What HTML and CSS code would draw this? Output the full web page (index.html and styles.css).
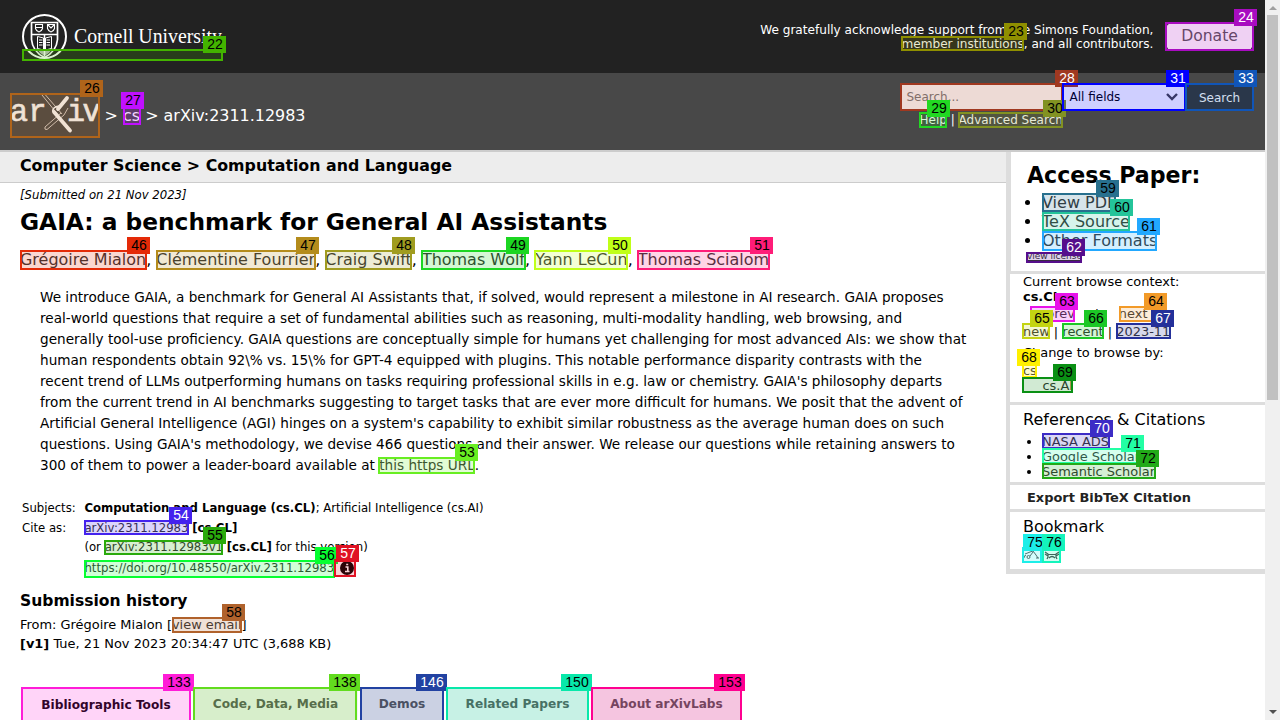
FILE: index.html
```html
<!DOCTYPE html>
<html lang="en">
<head>
<meta charset="utf-8">
<title>[2311.12983] GAIA: a benchmark for General AI Assistants</title>
<link rel="stylesheet" href="styles.css">
</head>
<body>
<div class="window">
  <div class="page">
    <header class="top">
      <svg class="cornell" width="204" height="48" viewBox="0 0 204 48">
        <circle cx="22.500" cy="23.500" r="21.500" fill="none" stroke="#fff" stroke-width="2"/>
        <path d="M9.500 9.500h26v17q-1 12-13 18q-12-6-13-18z" fill="none" stroke="#fff" stroke-width="1.700"/>
        <path d="M10 21.500h25M22.500 21.500v22" stroke="#fff" stroke-width="1.500"/>
        <path d="M13.500 11.500h7v4q-1 3-3.500 3.500q-2.500-.5-3.500-3.500zM25.500 11.500h7v4q-1 3-3.500 3.500q-2.500-.5-3.500-3.500zM13.500 14.500h7M26 12l3 3 3-3" fill="none" stroke="#fff" stroke-width="1.100"/>
        <path d="M15.500 23.500l6 1.500v12l-6-1.500zM29.500 23.500l-6 1.500v12l6-1.500z" fill="none" stroke="#fff"/>
        <path d="M17 27h3.500M17 29.500h3.500M17 32h3.500M24.500 27h3.500M24.500 29.500h3.500M24.500 32h3.500" stroke="#fff" stroke-width="1.200"/>
        <path d="M14 35q3 5 8.500 8q5.500-3 8.500-8l-8.500 3z" fill="#fff" opacity=".7"/>
        <text x="52" y="30" class="cornell-name" textLength="148" lengthAdjust="spacingAndGlyphs">Cornell University</text>
      </svg>
      <div class="sponsors">We gratefully acknowledge support from the Simons Foundation,<br><a>member institutions</a>, and all contributors.</div>
      <a class="donate">Donate</a>
    </header>
    <div class="bar">
      <div class="crumbs">
        <svg class="arxiv" width="90" height="45" viewBox="0 0 90 45">
          <g class="arxiv-letters"><text x="0" y="28" textLength="18" lengthAdjust="spacingAndGlyphs">a</text><text x="18.500" y="28" textLength="18" lengthAdjust="spacingAndGlyphs">r</text><text x="57" y="28" textLength="18" lengthAdjust="spacingAndGlyphs">i</text><text x="72.500" y="28" textLength="18" lengthAdjust="spacingAndGlyphs">v</text></g>
          <path d="M32 2L49 23M35.500 2L52 21M51 20L35 34Q34 37 37 36.500L54 22L58 15" fill="none" stroke="#d8d0cb" stroke-width="1"/>
          <path d="M57 5L48 16" stroke="#fff" stroke-width="3.800" stroke-linecap="round"/>
          <path d="M44 19L60 37.500" stroke="#fff" stroke-width="3.800" stroke-linecap="round"/>
          <path d="M43 19Q42 14 49 13" fill="none" stroke="#fff" stroke-width="1.500"/>
        </svg>
        <span class="trail">&gt; <a>cs</a> &gt; arXiv:2311.12983</span>
      </div>
      <form class="search">
        <div class="fields"><span class="query">Search...</span><span class="select">All fields<svg width="14" height="10" viewBox="0 0 14 10"><path d="M2 2l5 5 5-5" fill="none" stroke="#444" stroke-width="2.400"/></svg></span><span class="go">Search</span></div>
        <div class="help"><a>Help</a> | <a>Advanced Search</a></div>
      </form>
    </div>
    <div class="columns">
      <main class="paper">
        <div class="subject">Computer Science &gt; Computation and Language</div>
        <div class="inner">
          <div class="dateline">[Submitted on 21 Nov 2023]</div>
          <h1 class="title">GAIA: a benchmark for General AI Assistants</h1>
          <div class="authors"><a>Grégoire Mialon</a>, <a>Clémentine Fourrier</a>, <a>Craig Swift</a>, <a>Thomas Wolf</a>, <a>Yann LeCun</a>, <a>Thomas Scialom</a></div>
          <blockquote class="abstract">We introduce GAIA, a benchmark for General AI Assistants that, if solved, would represent a milestone in AI research. GAIA proposes<br>real-world questions that require a set of fundamental abilities such as reasoning, multi-modality handling, web browsing, and<br>generally tool-use proficiency. GAIA questions are conceptually simple for humans yet challenging for most advanced AIs: we show that<br>human respondents obtain 92\% vs. 15\% for GPT-4 equipped with plugins. This notable performance disparity contrasts with the<br>recent trend of LLMs outperforming humans on tasks requiring professional skills in e.g. law or chemistry. GAIA's philosophy departs<br>from the current trend in AI benchmarks suggesting to target tasks that are ever more difficult for humans. We posit that the advent of<br>Artificial General Intelligence (AGI) hinges on a system's capability to exhibit similar robustness as the average human does on such<br>questions. Using GAIA's methodology, we devise 466 questions and their answer. We release our questions while retaining answers to<br>300 of them to power a leader-board available at <a>this https URL</a>.</blockquote>
          <div class="meta">
            <span>Subjects:</span><span><b>Computation and Language (cs.CL)</b>; Artificial Intelligence (cs.AI)</span>
            <span>Cite as:</span><span><a>arXiv:2311.12983</a> <b>[cs.CL]</b></span>
            <span></span><span>(or <a>arXiv:2311.12983v1</a> <b>[cs.CL]</b> for this version)</span>
            <span></span><span class="doi"><a>https://doi.org/10.48550/arXiv.2311.12983</a><svg width="14" height="14" viewBox="0 0 14 14"><circle cx="7" cy="7" r="7"/><path d="M5.500 6h2.300v4M5 10.500h4.500M6.200 3.500h2" fill="none" stroke="#fff" stroke-width="1.600"/></svg></span>
          </div>
          <h2 class="history">Submission history</h2>
          <div class="versions">From: Grégoire Mialon [<a>view email</a>]<br><b>[v1]</b> Tue, 21 Nov 2023 20:34:47 UTC (3,688 KB)</div>
          <nav class="tabs"><span class="tab active">Bibliographic Tools</span><span class="tab code">Code, Data, Media</span><span class="tab demos">Demos</span><span class="tab related">Related Papers</span><span class="tab about">About arXivLabs</span></nav>
        </div>
      </main>
      <aside class="side">
        <section class="access"><h2>Access Paper:</h2><ul><li><a>View PDF</a></li><li><a>TeX Source</a></li><li><a>Other Formats</a></li></ul><a class="license">view license</a></section>
        <section class="browse">
          <div>Current browse context:</div><b>cs.CL</b>
          <div class="prevnext"><a>&lt;&nbsp;prev</a><span>|</span><a>next&nbsp;&gt;</a></div>
          <div class="recent"><a>new</a> | <a>recent</a> | <a>2023-11</a></div>
          <div class="change">Change to browse by:</div>
          <div class="cs"><a>cs</a></div><div class="sub"><a>cs.AI</a></div>
        </section>
        <section class="refs"><h3>References &amp; Citations</h3><ul><li><a>NASA ADS</a></li><li><a>Google Scholar</a></li><li><a>Semantic Scholar</a></li></ul></section>
        <section class="export">Export BibTeX Citation</section>
        <section class="bookmark"><h3>Bookmark</h3>
          <div class="icons"><svg width="17" height="12" viewBox="0 0 17 12"><path d="M1 9Q1 6 3 6.500M4 8a1.500 1.500 0 1 0 3 0a1.500 1.500 0 1 0-3 0M2 5l5-2 3-1 3 4 2 3M7 7l3-4M13 9h3" fill="none" stroke="#555" stroke-width="1"/></svg><svg width="16" height="12" viewBox="0 0 16 12"><path d="M1 3l3 2v3L3 10M15 3l-3 2v3l1 2M4 5.500h8M5 9q3-3 6 0M1 5l3 2M15 5l-3 2" fill="none" stroke="#444" stroke-width="1.200"/></svg></div>
        </section>
      </aside>
    </div>
  </div>
  <div class="scrollbar"><i class="up"></i><i class="thumb"></i><i class="down"></i></div>
  <div class="marks" id="marks"></div>
</div>
<script src="marks.js"></script>
</body>
</html>
```
FILE: styles.css
```css
* { box-sizing: border-box; }
body { margin: 0; overflow: hidden; font-family: "DejaVu Sans", sans-serif; font-size: 12.95px; color: #000; background: #fff; }
h1, h2, h3, ul, blockquote { margin: 0; padding: 0; }
a { color: #333; }
.window { position: relative; display: flex; width: 1280px; height: 720px; overflow: hidden; white-space: nowrap; }
.page { width: 1265px; height: 720px; overflow: hidden; }

.top { display: flex; height: 73px; padding: 13px 12px 0 22px; background: #222; color: #fff; }
.cornell-name { font-family: "Liberation Serif", serif; font-size: 21.5px; fill: #fff; }
.sponsors { margin: 10px 12.6px 0 auto; font-size: 12.1px; line-height: 14px; text-align: right; }
.top a, .bar a { color: #fff; }
.top .donate { width: 87px; height: 27px; margin-top: 10px; border-radius: 6px; background: #fff; color: #555; font-size: 15.6px; line-height: 26px; text-align: center; }

.bar { display: flex; justify-content: space-between; height: 77px; padding: 10px 11px 0 10px; background: #484848; color: #fff; }
.crumbs { display: flex; padding-top: 10px; font-size: 15.95px; }
.arxiv { display: block; }
.arxiv-letters { font-family: "Liberation Mono", monospace; font-size: 32px; fill: #fff; stroke: #fff; stroke-width: .7px; }
.trail { margin-left: 4.6px; line-height: 45px; }
.fields { display: flex; width: 354px; height: 28px; font-size: 12px; line-height: 28px; }
.query { width: 162px; padding-left: 6.5px; background: #fff; color: #7b7b7b; }
.select { display: flex; align-items: center; justify-content: space-between; width: 124px; padding: 0 7px 0 7.5px; background: #fff; color: #000; }
.go { flex: 1; padding-right: 1px; background: #303030; text-align: center; line-height: 30px; }
.help { padding-left: 19.5px; font-size: 12px; line-height: 18px; }

.columns { display: flex; border-top: 2px solid #ccc; }
.paper { width: 1006px; }
.subject { height: 31px; padding-left: 20px; border-bottom: 1px solid #ccc; background: #ededed; font-size: 15.82px; font-weight: bold; line-height: 28px; }
.inner { padding-left: 20px; }
.dateline { font-size: 11.7px; font-style: italic; line-height: 24px; }
.title { font-size: 23.3px; line-height: 30px; }
.authors { margin-top: 13px; font-size: 15.97px; line-height: 20px; }
.abstract { margin: 17px 0 0 20px; font-size: 13.61px; line-height: 21px; }
.meta { display: grid; grid-template-columns: 62.4px auto; grid-template-rows: 20px 19px 20px 21px; margin: 22px 0 0 2px; font-size: 11.7px; line-height: 20px; }
.doi { display: flex; align-items: center; gap: 6px; }
.history { margin-top: 12px; font-size: 15.55px; line-height: 22px; }
.versions { margin-top: 3px; line-height: 19px; }
.tabs { display: flex; gap: 2px; height: 40px; margin: 34px 0 0 1px; font-size: 12.15px; font-weight: bold; }
.tab { height: 40px; line-height: 34px; text-align: center; background: #f3f3f3; color: #555; }
.active { width: 170px; border: 1px solid #ccc; border-radius: 5px 5px 0 0; background: #fff; color: #000; }
.code { width: 165px; }
.demos { width: 84px; }
.related { width: 143px; }
.about { width: 151px; }

.side { width: 259px; height: 422px; border-left: 4px solid #ddd; border-bottom: 5px solid #ddd; }
.side section { padding-left: 13px; border-bottom: 3px solid #ddd; line-height: 15px; }
.side .access { height: 122px; padding: 6px 0 0 16px; border-left: 1px solid #ddd; }
.access h2 { font-size: 22.1px; line-height: 34px; }
.access ul { margin-top: 1px; padding-left: 15px; font-size: 16px; line-height: 19px; }
.license { display: block; font-size: 9px; line-height: 13px; text-decoration: underline; }
.side .browse { height: 131px; }
.prevnext { display: flex; margin-top: 2px; padding-left: 8px; }
.prevnext span { width: 44px; text-align: center; }
.recent { margin-top: 3px; }
.change { margin-top: 6px; }
.cs { margin-top: 3px; }
.sub { padding-left: 19.5px; }
.side .refs { height: 80px; padding-top: 5px; }
.refs h3, .bookmark h3 { font-size: 16px; font-weight: normal; line-height: 20px; }
.refs ul { margin-top: 4px; padding-left: 19px; }
.side .export { height: 27px; padding-left: 17px; color: #222; font-weight: bold; line-height: 25px; }
.side .bookmark { padding-top: 5px; border: 0; }
.icons { display: flex; gap: 4px; margin-top: 12px; }

.scrollbar { display: flex; flex-direction: column; align-items: center; width: 15px; height: 720px; padding: 6px 0 6px; background: #f0f0f0; }
.up { border: 4px solid transparent; border-top: 0; border-bottom: 4px solid #a0a0a0; }
.thumb { width: 11px; height: 385px; margin-top: 5px; background: #c1c1c1; }
.down { margin-top: auto; border: 4px solid transparent; border-bottom: 0; border-top: 4px solid #505050; }

.marks { position: absolute; inset: 0; font: 14px/17px "Liberation Sans", sans-serif; }
.mark, .tag { position: absolute; }
.mark { border: 2px solid; }
.tag { height: 17px; padding-left: 1px; text-align: center; }
```
FILE: marks.js
```js
// id, left, top, right, bottom, tag left, tag top, colour, light digits
const marks = [
[22,22,49,223,61,203,36,"#43b300"],
[23,901,36,1024,51,1004,23,"#8f8f00"],
[24,1165,22,1254,51,1234,9,"#a80cc0",1],
[26,10,93,100,138,80,80,"#b0641a"],
[27,123,106,141,125,121,92,"#c010ff"],
[28,900,83,1063,111,1055,70,"#a03820",1],
[29,919,112,947,128,927,100,"#22d822"],
[30,958,112,1063,128,1043,100,"#829222"],
[31,1062,83,1186,111,1166,70,"#0000ff",1],
[33,1185,83,1254,111,1234,70,"#1055b8",1],
[46,20,250,147,270,127,237,"#e42a08"],
[47,156,250,316,270,296,237,"#b48c1c"],
[48,325,250,412,270,392,237,"#a09c20"],
[49,421,250,526,270,506,237,"#1cd622"],
[50,534,250,628,270,608,237,"#c0ff18"],
[51,637,250,770,270,750,237,"#ff1c78"],
[53,378,457,475,474,455,444,"#68ee22"],
[54,84,520,189,535,169,507,"#4422ee",1],
[55,104,540,223,555,203,527,"#2aaa0c"],
[56,84,560,335,578,315,547,"#06ff30"],
[57,334,559,356,577,336,545,"#e01224",1],
[58,172,617,242,633,222,604,"#b0622c"],
[59,1042,193,1116,212,1096,180,"#28708e"],
[60,1042,212,1130,231,1110,199,"#24c49a"],
[61,1042,231,1157,251,1137,218,"#22a8ff"],
[62,1026,252,1082,263,1062,239,"#560e8c",1],
[63,1030,306,1075,322,1055,293,"#e812ea"],
[64,1119,306,1164,322,1144,293,"#f29a28"],
[65,1022,323,1050,339,1030,310,"#c4d412"],
[66,1062,323,1104,339,1084,310,"#1cc826"],
[67,1116,323,1171,339,1151,310,"#24309a",1],
[68,1022,362,1037,378,1017,349,"#fff000"],
[69,1022,377,1073,393,1053,364,"#0a9014"],
[70,1042,433,1110,449,1090,420,"#3c2cc6",1],
[71,1042,448,1141,464,1121,435,"#22ffa4"],
[72,1042,463,1156,479,1136,450,"#22aa18"],
[75,1022,547,1042,563,1023,534,"#1ceee8"],
[76,1042,547,1061,563,1042,534,"#14f4bc"],
[133,21,687,191,730,163,674,"#ff1cd8"],
[138,193,687,357,730,329,674,"#62dc1e"],
[146,360,687,444,730,416,674,"#2242a2",1],
[150,446,687,589,730,561,674,"#08e8aa"],
[153,591,687,742,730,714,674,"#ff0090"]
];
const layer = document.getElementById("marks");
for (const [id, x, y, r, b, tx, ty, color, light] of marks) {
  const box = document.createElement("div");
  box.className = "mark";
  box.style.cssText = `left:${x}px;top:${y}px;width:${r - x}px;height:${b - y}px;border-color:${color};background-color:${color}30`;
  const tag = document.createElement("div");
  tag.className = "tag";
  tag.textContent = id;
  tag.style.cssText = `left:${tx}px;top:${ty}px;width:${id > 99 ? 31 : 23}px;background:${color};color:${light ? "#fff" : "#000"}`;
  layer.append(box, tag);
}
```
